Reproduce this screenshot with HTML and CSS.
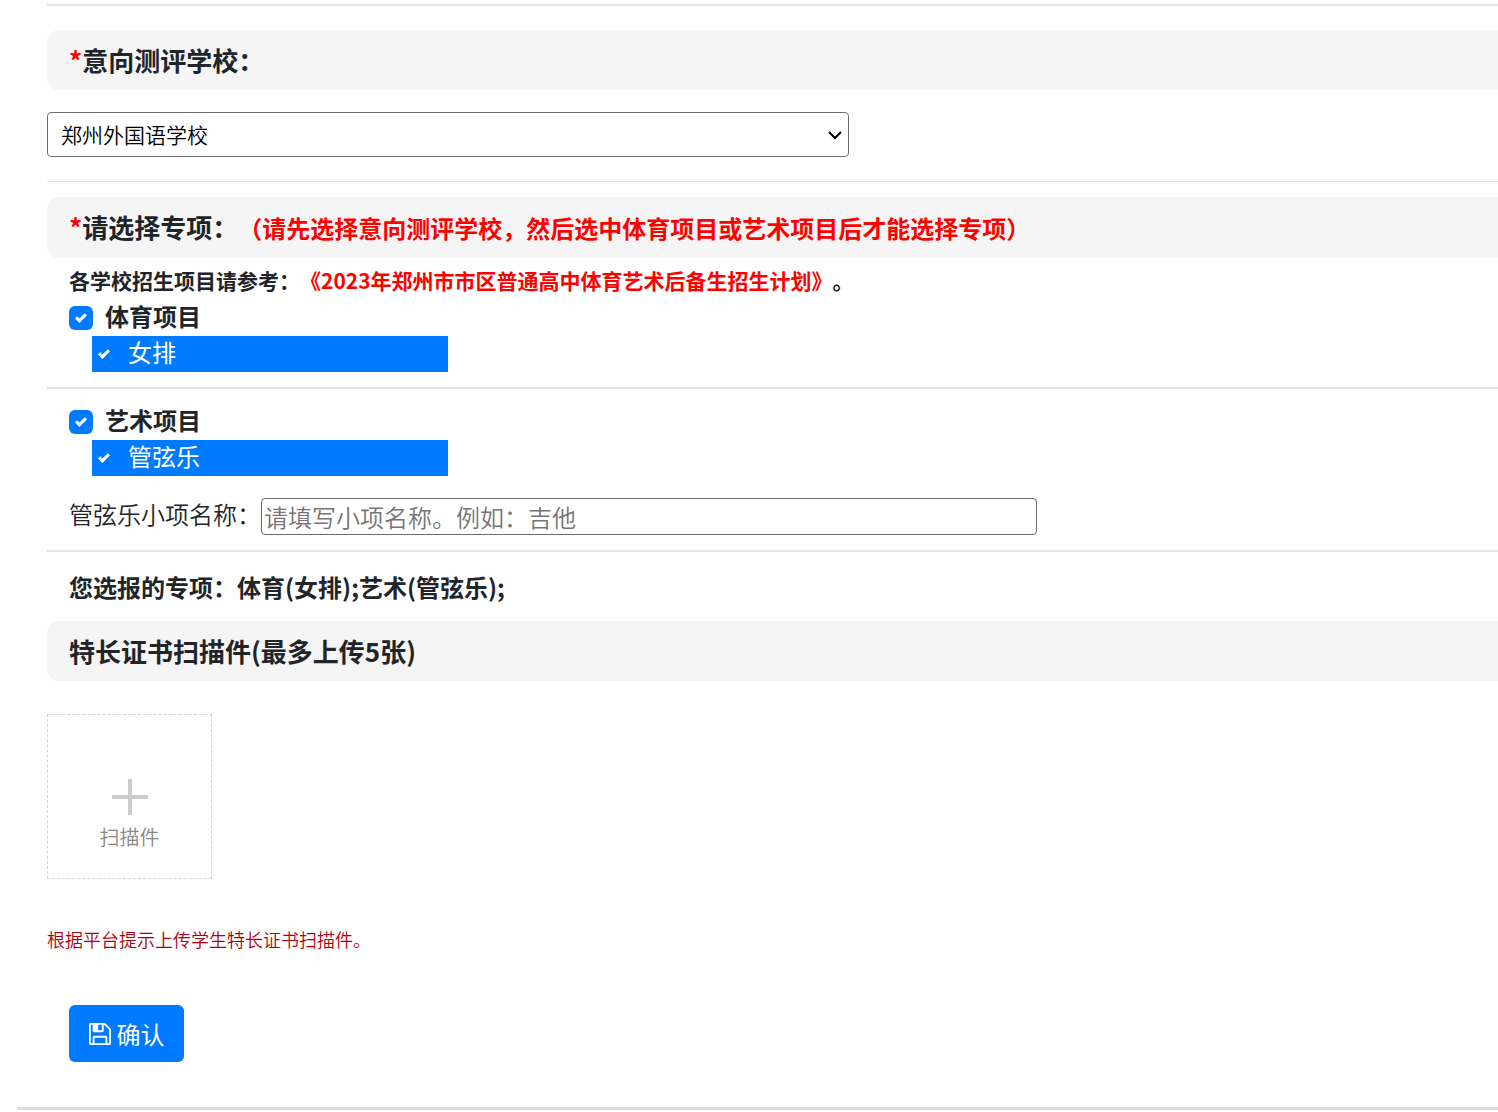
FILE: index.html
```html
<!DOCTYPE html>
<html lang="zh-CN">
<head>
<meta charset="utf-8">
<meta name="viewport" content="width=device-width, initial-scale=1">
<title>特长生报名</title>
<link rel="stylesheet" href="styles.css">
</head>
<body>
<form class="page">
  <div class="content">
    <hr class="rule rule-top">

    <h2 class="section-title"><label for="school"><span class="required">*</span>意向测评学校：</label></h2>
    <select id="school" class="school-select">
      <option>郑州外国语学校</option>
    </select>

    <hr class="rule rule-thin">

    <h2 class="section-title"><span class="required">*</span>请选择专项：<span class="title-note">（请先选择意向测评学校，然后选中体育项目或艺术项目后才能选择专项）</span></h2>
    <p class="reference">各学校招生项目请参考：<a class="plan-link" href="#">《2023年郑州市市区普通高中体育艺术后备生招生计划》</a>。</p>

    <div class="group">
      <label class="category"><input class="check" type="checkbox" checked>体育项目</label>
      <label class="option"><input class="check" type="checkbox" checked>女排</label>
    </div>

    <hr class="rule">

    <div class="group">
      <label class="category"><input class="check" type="checkbox" checked>艺术项目</label>
      <label class="option"><input class="check" type="checkbox" checked>管弦乐</label>
      <div class="detail">
        <label for="detail-name">管弦乐小项名称：</label>
        <input id="detail-name" class="detail-input" type="text" placeholder="请填写小项名称。例如：吉他">
      </div>
    </div>

    <hr class="rule">

    <p class="summary">您选报的专项：体育(女排);艺术(管弦乐);</p>

    <h2 class="section-title">特长证书扫描件(最多上传5张)</h2>
    <button class="upload" type="button">
      <svg class="upload-icon" viewBox="0 0 36 36" aria-hidden="true"><path d="M18 0v36M0 18h36"/></svg>
      <span>扫描件</span>
    </button>
    <p class="hint">根据平台提示上传学生特长证书扫描件。</p>

    <button class="submit" type="submit">
      <svg class="submit-icon" viewBox="0 0 1536 1536" aria-hidden="true">
        <path d="M384 1408h768v-384H384v384zm896 0h128V512q0-14-10-38.500t-20-34.500l-281-281q-10-10-34-20t-39-10v416q0 40-28 68t-68 28H352q-40 0-68-28t-28-68V128H128v1280h128V992q0-40 28-68t68-28h832q40 0 68 28t28 68v416zM896 480V160q0-13-9.500-22.500T864 128H672q-13 0-22.500 9.500T640 160v320q0 13 9.500 22.500T672 512h192q13 0 22.500-9.500T896 480zm640 32v928q0 40-28 68t-68 28H96q-40 0-68-28t-28-68V96q0-40 28-68T96 0h928q40 0 88 20t76 48l280 280q28 28 48 76t20 88z"/>
      </svg>
      <span>确认</span>
    </button>
  </div>
  <hr class="rule rule-end">
</form>
</body>
</html>
```
FILE: styles.css
```css
* {
  box-sizing: border-box;
}

body {
  margin: 0;
  background: #fefefe;
  color: #212529;
  font-family: "Noto Sans CJK SC", "Noto Sans", sans-serif;
  font-size: 24px;
  line-height: 36px;
  text-spacing-trim: space-all;
}

button,
input,
select {
  font: inherit;
}

.page {
  padding: 4px 0 2px 17px;
}

.content {
  padding-left: 30px;
}

.rule {
  height: 2px;
  margin: 15px 0;
  border: 0;
  background: #e5e5e5;
}

.rule-top {
  margin: 0 0 24px;
}

.rule-thin {
  height: 1px;
  margin: 24px 0 15px;
}

.rule-end {
  height: 3px;
  margin: 45px 0 0;
  background: #dcdcdc;
}

.section-title {
  margin: 0;
  padding: 12px 22px;
  border-radius: 12px 0 0 12px;
  background: #f5f5f5;
  font-size: 26px;
  font-weight: 700;
}

.required,
.title-note,
.plan-link {
  color: #f00;
}

.title-note {
  font-size: 24px;
}

.school-select {
  display: block;
  width: 100%;
  max-width: 802px;
  height: 45px;
  margin-top: 22px;
  padding: 0 28px 2px 13px;
  border: 1px solid #6c6c6c;
  border-radius: 4px;
  appearance: none;
  background: #fff url("data:image/svg+xml,%3Csvg xmlns='http://www.w3.org/2000/svg' viewBox='0 0 14 10'%3E%3Cpath fill='none' stroke='%23000' stroke-width='2' d='M1 2l6 6 6-6'/%3E%3C/svg%3E") right 6px center / 14px 10px no-repeat;
  color: #000;
  font-size: 21px;
  font-weight: 350;
}

.reference {
  margin: 0;
  padding: 4px 22px 2px;
  font-size: 21px;
  font-weight: 700;
}

.plan-link {
  text-decoration: none;
}

.group {
  padding: 0 22px;
}

.category,
.option {
  display: flex;
  align-items: flex-start;
  gap: 12px;
  padding-bottom: 4px;
  line-height: 32px;
}

.category {
  font-weight: 700;
}

.option {
  width: 100%;
  max-width: 356px;
  margin-left: 23px;
  background: #007bff;
  color: #fff;
}

.check {
  flex: none;
  width: 24px;
  height: 24px;
  margin: 6px 0 0;
  border-radius: 6px;
  appearance: none;
  background: #fff;
}

.check:checked {
  background: #007bff url("data:image/svg+xml,%3Csvg xmlns='http://www.w3.org/2000/svg' viewBox='0 0 8 8'%3E%3Cpath fill='%23fff' d='M6.564.75l-3.59 3.612-1.538-1.55L0 4.26 2.974 7.25 8 2.193z'/%3E%3C/svg%3E") center / 12px 12px no-repeat;
}

.detail {
  display: flex;
  align-items: flex-start;
  margin-top: 22px;
  font-weight: 350;
  line-height: 32px;
}

.detail-input {
  flex: 0 1 776px;
  min-width: 0;
  height: 37px;
  padding: 0 2px;
  border: 1px solid #6c6c6c;
  border-radius: 4px;
  background: #fff;
}

.detail-input::placeholder {
  color: #757575;
}

.summary {
  margin: 0;
  padding: 2px 22px 16px;
  font-weight: 700;
}

.upload {
  display: flex;
  flex-direction: column;
  align-items: center;
  justify-content: flex-end;
  gap: 4px;
  width: 165px;
  height: 165px;
  margin-top: 33px;
  padding: 0 0 23px;
  border: 1px dashed #d5d5d5;
  background: transparent;
  color: #888;
  font-size: 20px;
  font-weight: 350;
}

.upload-icon {
  width: 36px;
  height: 36px;
  fill: none;
  stroke: #ccc;
  stroke-width: 4;
}

.hint {
  margin: 42px 0 0;
  color: #b00010;
  font-size: 18px;
  font-weight: 350;
}

.submit {
  display: flex;
  align-items: center;
  justify-content: center;
  gap: 6px;
  width: 115px;
  height: 57px;
  margin: 48px 0 0 22px;
  padding: 0;
  border: 0;
  border-radius: 6px;
  background: #007bff;
  color: #fff;
}

.submit-icon {
  width: 22px;
  height: 22px;
  fill: #fff;
}
```
